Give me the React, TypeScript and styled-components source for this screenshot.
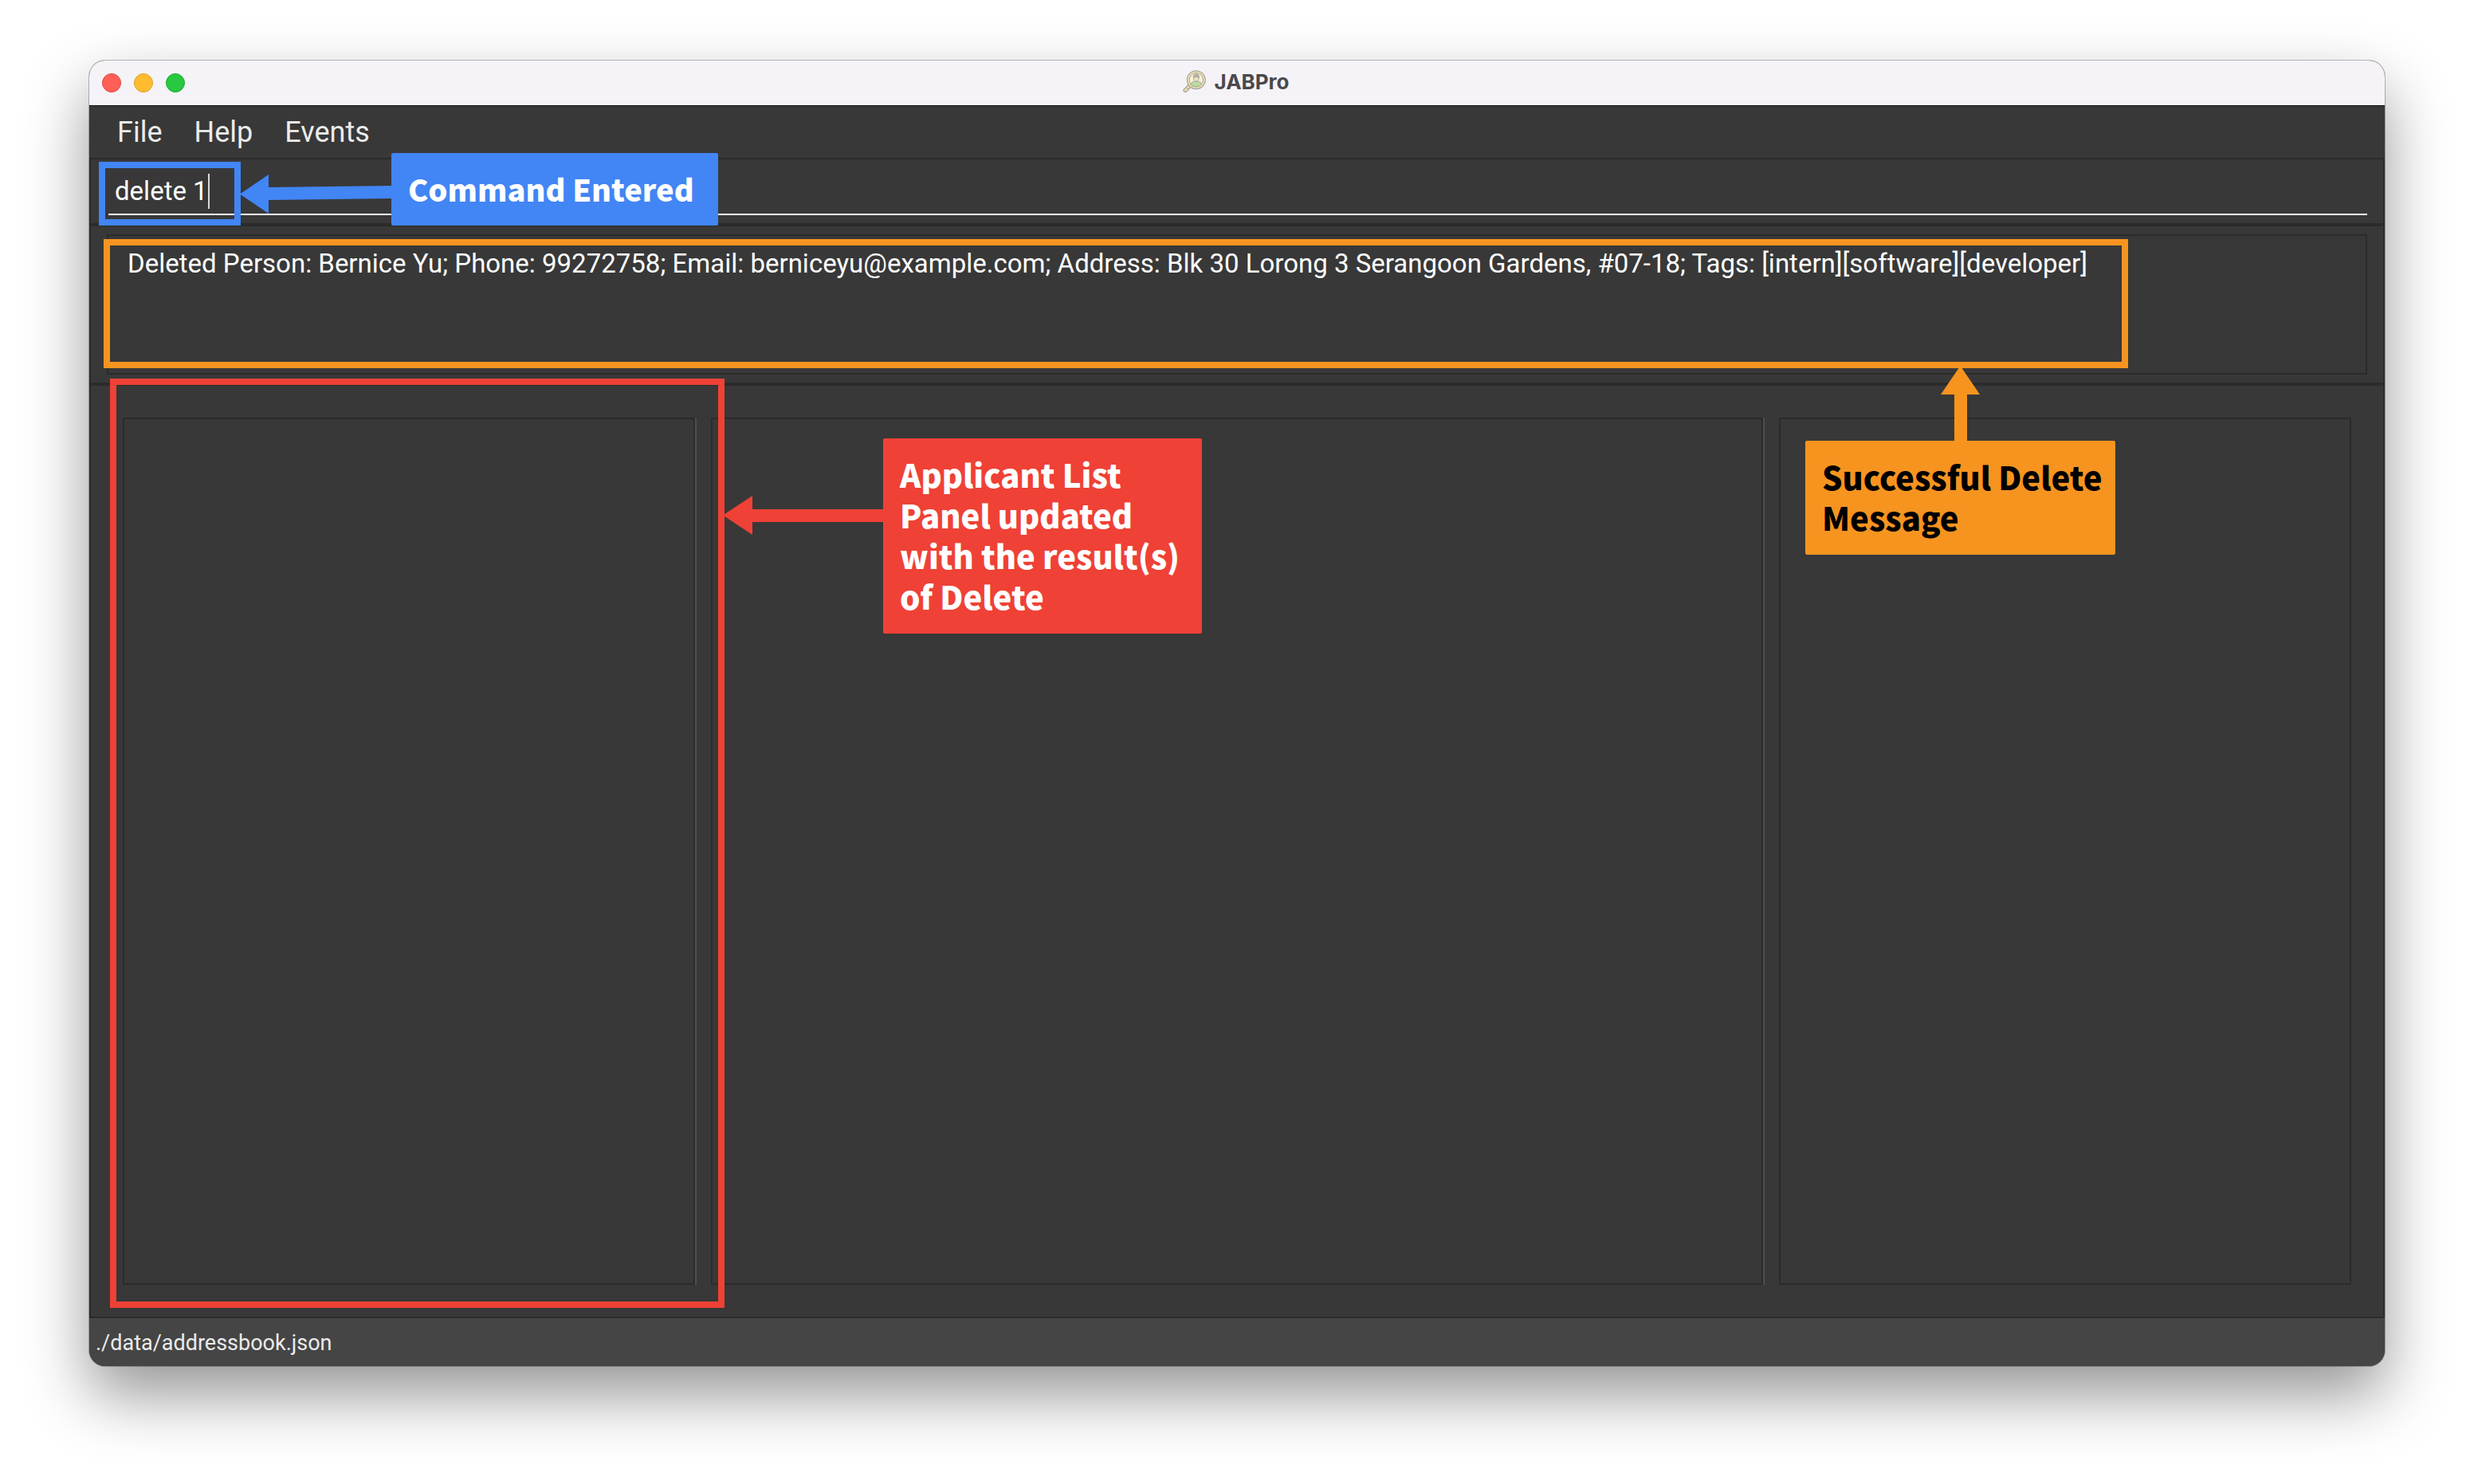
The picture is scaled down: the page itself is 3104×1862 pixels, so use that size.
import React, { useState } from "react";
import styled, { createGlobalStyle } from "styled-components";

const color = {
  pane: "#383838",
  line: "#2b2b2b",
  divider: "#4f4f4f",
  status: "#454545",
  text: "#ebebeb",
  blue: "#4285f4",
  orange: "#f7941f",
  red: "#ef4136",
};

const ui = `Roboto, "Liberation Sans", sans-serif`;

const GlobalStyle = createGlobalStyle`
  *, *::before, *::after { box-sizing: border-box; }
  body { margin: 0; background: #fff; font-family: ${ui}; }
  button, input, textarea { font: inherit; color: inherit; }
`;

const Desktop = styled.div`
  display: flex;
  min-height: 100vh;
  padding: 76px 112px 148px;
  overflow: hidden;
`;

const Window = styled.main`
  display: flex;
  flex: 1;
  flex-direction: column;
  min-width: 0;
  border-radius: 20px;
  background: ${color.pane};
  box-shadow: 0 0 0 1px rgba(0, 0, 0, 0.25), 0 36px 80px rgba(0, 0, 0, 0.42);
`;

const TitleBar = styled.header`
  display: grid;
  grid-template-columns: 1fr auto 1fr;
  align-items: center;
  height: 57px;
  padding: 0 16px;
  border-bottom: 1px solid #111;
  border-radius: 20px 20px 0 0;
  background: #f5f3f7;
`;

const Lights = styled.div`
  display: flex;
  gap: 16px;
`;

const Light = styled.button<{ $fill: string; $rim: string }>`
  width: 24px;
  height: 24px;
  padding: 0;
  border: 1px solid ${(p) => p.$rim};
  border-radius: 50%;
  background: ${(p) => p.$fill};
`;

const Title = styled.h1`
  display: flex;
  align-items: center;
  gap: 10px;
  margin: 0;
  padding: 0 2px 3px 0;
  color: #4a494c;
  font: 700 26px/32px Inter, sans-serif;
`;

const MenuBar = styled.nav`
  display: flex;
  height: 65px;
  padding-left: 15px;
`;

const MenuButton = styled.button`
  padding: 0 20px;
  border: 0;
  background: none;
  color: ${color.text};
  font-size: 36px;
  line-height: 42px;
`;

const Body = styled.div`
  display: flex;
  flex: 1;
  flex-direction: column;
  border: solid ${color.line};
  border-width: 2px 2px 0;
`;

const CommandPane = styled.section`
  position: relative;
  padding: 12px 20px 10px 22px;
  border-bottom: 4px solid ${color.line};
`;

const CommandField = styled.label`
  display: flex;
  align-items: center;
  height: 58px;
  padding-left: 8px;
  border-bottom: 2px solid #fff;
  color: #fff;
  font-size: 33px;
  line-height: 40px;
  cursor: text;
`;

const CommandInput = styled.input`
  field-sizing: content;
  min-width: 2px;
  padding: 0;
  border: 0;
  outline: 0;
  background: none;
  caret-color: transparent;
`;

const Caret = styled.span`
  width: 2px;
  height: 44px;
  background: #d8d8d8;
`;

const ResultPane = styled.section`
  position: relative;
  display: flex;
  padding: 10px 20px;
  border-bottom: 4px solid ${color.line};
`;

const ResultText = styled.textarea`
  flex: 1;
  height: 176px;
  padding: 15px 24px;
  border: 2px solid ${color.line};
  outline: 0;
  background: none;
  color: #fff;
  font-size: 33px;
  line-height: 40px;
  resize: none;
`;

const ListsPane = styled.section`
  display: grid;
  flex: 1;
  grid-template-columns: 359fr 20px 660fr 20px 359fr;
  padding: 40px;
  border-bottom: 2px solid ${color.line};
`;

const ListPanel = styled.div`
  position: relative;
`;

const ListBox = styled.ul`
  height: 100%;
  margin: 0;
  padding: 0;
  border: 2px solid ${color.line};
  list-style: none;
`;

const Divider = styled.div`
  width: 2px;
  background: ${color.divider};
`;

const StatusBar = styled.footer`
  height: 60px;
  padding: 2px 8px 0;
  border-radius: 0 0 20px 20px;
  background: ${color.status};
  color: ${color.text};
  font-size: 27px;
  line-height: 58px;
`;

const Frame = styled.div<{ $tone: string }>`
  position: absolute;
  z-index: 1;
  border: 8px solid ${(p) => p.$tone};
  pointer-events: none;
`;

const CommandFrame = styled(Frame)`
  top: 3px;
  left: 10px;
  width: 178px;
  height: 80px;
`;

const ResultFrame = styled(Frame)`
  top: 16px;
  left: 16px;
  width: 2540px;
  height: 162px;
`;

const ListFrame = styled(Frame)`
  inset: -49px -37px -29px -16px;
`;

const Note = styled.p<{ $tone: string; $ink: string }>`
  position: absolute;
  z-index: 1;
  margin: 0;
  padding: 20px 12px 21px 21px;
  border-radius: 2px;
  background: ${(p) => p.$tone};
  color: ${(p) => p.$ink};
  font: 900 40px/51px "Noto Sans CJK SC", sans-serif;
`;

const CommandNote = styled(Note)`
  top: -8px;
  left: 377px;
  width: 410px;
  font-size: 38px;
  line-height: 50px;
`;

const ResultNote = styled(Note)`
  top: 269px;
  left: 2151px;
  width: 389px;
`;

const ListNote = styled(Note)`
  top: 26px;
  left: calc(100% + 236px);
  width: 400px;
`;

const Arrow = styled.svg<{ $tone: string }>`
  position: absolute;
  z-index: 1;
  display: block;
  fill: ${(p) => p.$tone};
  pointer-events: none;
`;

const CommandArrow = styled(Arrow)`
  top: 19px;
  left: 187px;
`;

const ResultArrow = styled(Arrow)`
  top: 175px;
  left: 2321px;
`;

const ListArrow = styled(Arrow)`
  top: 98px;
  left: calc(100% + 35px);
`;

function AppIcon() {
  return (
    <svg width="29" height="29" viewBox="0 0 29 29" aria-hidden="true">
      <path d="M7.2 18.2 1.6 23.8a2 2 0 0 0 0 3 2 2 0 0 0 3 0l5.6-5.6z" fill="#e9dca4" stroke="#a5a3a5" strokeWidth="1.2" />
      <path d="M4.4 21.4l2.9 2.9" stroke="#a5a3a5" strokeWidth="1" />
      <circle cx="16.8" cy="12.2" r="11.4" fill="#efe2a8" stroke="#a5a3a5" strokeWidth="1.2" />
      <circle cx="16.8" cy="12.2" r="8.7" fill="#f4f0da" stroke="#a5a3a5" strokeWidth="1" />
      <path d="M10.6 18.3v-1.1c0-1.8 1.6-2.7 4-3h4.4c2.4.3 4 1.2 4 3v1.1a8.7 8.7 0 0 1-12.4 0z" fill="#bddc9c" stroke="#a5a3a5" strokeWidth="0.9" />
      <path d="M13.6 8.8v1.5c0 2.2 1.4 3.7 3.2 3.7s3.2-1.5 3.2-3.7V8.8z" fill="#f1e3b4" stroke="#a5a3a5" strokeWidth="0.9" />
      <path d="M13.3 9.8c-.6-3.2 1-4.9 3.6-4.9s4.2 1.7 3.5 4.9c-.5-1.3-1.4-1.9-2.6-1.9s-3.5-.2-4.5 1.9z" fill="#b9b2a0" stroke="#a5a3a5" strokeWidth="0.8" />
    </svg>
  );
}

export default function App() {
  const [command, setCommand] = useState("delete 1");

  return (
    <>
      <GlobalStyle />
      <Desktop>
        <Window>
          <TitleBar>
            <Lights>
              <Light aria-label="Close" $fill="#ff5f57" $rim="#e2463f" />
              <Light aria-label="Minimize" $fill="#febc2e" $rim="#e0a028" />
              <Light aria-label="Zoom" $fill="#28c840" $rim="#1dad2b" />
            </Lights>
            <Title>
              <AppIcon />
              JABPro
            </Title>
          </TitleBar>

          <MenuBar>
            <MenuButton>File</MenuButton>
            <MenuButton>Help</MenuButton>
            <MenuButton>Events</MenuButton>
          </MenuBar>

          <Body>
            <CommandPane>
              <CommandField>
                <CommandInput
                  aria-label="Command"
                  value={command}
                  onChange={(e) => setCommand(e.target.value)}
                />
                <Caret />
              </CommandField>
              <CommandFrame $tone={color.blue} />
              <CommandArrow $tone={color.blue} width="191" height="49" aria-hidden="true">
                <path d="M0 24.5 36 0v16l155-2v16l-155 2v17z" />
              </CommandArrow>
              <CommandNote $tone={color.blue} $ink="#fff">
                Command Entered
              </CommandNote>
            </CommandPane>

            <ResultPane>
              <ResultText
                aria-label="Result"
                readOnly
                value="Deleted Person: Bernice Yu; Phone: 99272758; Email: berniceyu@example.com; Address: Blk 30 Lorong 3 Serangoon Gardens, #07-18; Tags: [intern][software][developer]"
              />
              <ResultFrame $tone={color.orange} />
              <ResultArrow $tone={color.orange} width="49" height="95" aria-hidden="true">
                <path d="M24.5 0 49 36H33v59H17V36H0z" />
              </ResultArrow>
              <ResultNote $tone={color.orange} $ink="#000">
                Successful Delete Message
              </ResultNote>
            </ResultPane>

            <ListsPane>
              <ListPanel>
                <ListBox aria-label="Applicants" />
                <ListFrame $tone={color.red} />
                <ListArrow $tone={color.red} width="202" height="49" aria-hidden="true">
                  <path d="M0 24.5 37 0v17h165v16H37v16z" />
                </ListArrow>
                <ListNote $tone={color.red} $ink="#fff">
                  Applicant List Panel updated with the result(s) of Delete
                </ListNote>
              </ListPanel>
              <Divider />
              <ListBox aria-label="Applicant details" />
              <Divider />
              <ListBox aria-label="Events" />
            </ListsPane>
          </Body>

          <StatusBar>./data/addressbook.json</StatusBar>
        </Window>
      </Desktop>
    </>
  );
}
